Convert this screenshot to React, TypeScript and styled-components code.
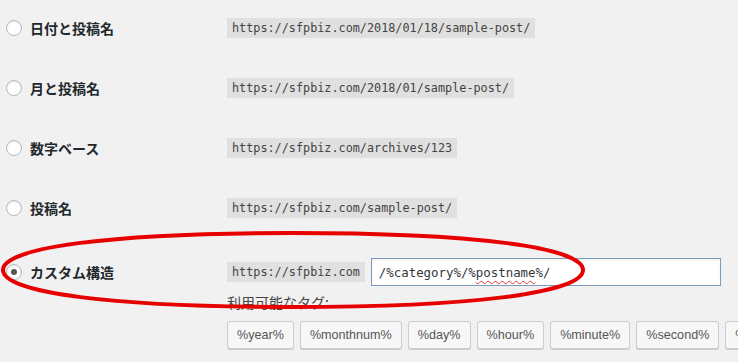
import styled, { createGlobalStyle } from 'styled-components';

const GlobalStyle = createGlobalStyle`
  html, body {
    margin: 0;
    padding: 0;
    background: #f1f1f1;
    overflow: hidden;
  }
  body {
    font-family: "Noto Sans CJK JP", "Noto Sans", sans-serif;
    color: #23282d;
  }
`;

const Page = styled.div`
  position: relative;
  width: 738px;
  height: 362px;
  padding: 18px 0 0 6px;
  box-sizing: border-box;
  overflow: hidden;
`;

const Option = styled.div<{ $custom?: boolean }>`
  display: grid;
  grid-template-columns: 221px 1fr;
  align-items: ${p => (p.$custom ? 'start' : 'center')};
  height: 20px;
  margin-bottom: 40px;
`;

const LabelCell = styled.label<{ $custom?: boolean }>`
  display: flex;
  align-items: center;
  gap: 8px;
  height: 20px;
  margin-top: ${p => (p.$custom ? '4px' : '0')};
  font-size: 14px;
  font-weight: 700;
  color: #23282d;
`;

const Radio = styled.span<{ $checked?: boolean }>`
  position: relative;
  width: 16px;
  height: 16px;
  box-sizing: border-box;
  border-radius: 50%;
  border: 1px solid #b4b9be;
  background: #fff;
  box-shadow: inset 0 1px 2px rgba(0, 0, 0, 0.1);
  flex-shrink: 0;

  &::after {
    content: '';
    display: ${p => (p.$checked ? 'block' : 'none')};
    position: absolute;
    left: 4px;
    top: 4px;
    width: 6px;
    height: 6px;
    border-radius: 50%;
    background: #555;
  }
`;

const Code = styled.code`
  display: inline-block;
  justify-self: start;
  height: 20px;
  line-height: 20px;
  padding: 0 5px;
  background: rgba(0, 0, 0, 0.065);
  font-family: "DejaVu Sans Mono", monospace;
  font-size: 11.8px;
  color: #444;
`;

const CustomColumn = styled.div`
  display: flex;
  flex-direction: column;
`;

const StructureRow = styled.div`
  display: flex;
  align-items: center;
  gap: 6px;
`;

const Field = styled.div`
  width: 350px;
  height: 28px;
  box-sizing: border-box;
  border: 1px solid #7a9cbb;
  background: #fff;
  box-shadow: inset 0 1px 2px rgba(0, 0, 0, 0.07);
  padding: 0 7px;
  display: flex;
  align-items: center;
  font-family: "DejaVu Sans Mono", monospace;
  font-size: 12.4px;
  color: #32373c;
  white-space: pre;
`;

const Misspelled = styled.span`
  text-decoration: underline wavy #d33;
  text-decoration-thickness: 1px;
  text-underline-offset: 3px;
`;

const TagsCaption = styled.div`
  margin-top: 6px;
  height: 20px;
  line-height: 20px;
  font-size: 14px;
  font-weight: 400;
  color: #444;
`;

const TagList = styled.div`
  display: flex;
  gap: 6px;
  margin-top: 9px;
  white-space: nowrap;
`;

const TagButton = styled.button`
  flex-shrink: 0;
  height: 28px;
  padding: 0 9px;
  border: 1px solid #ccc;
  border-radius: 3px;
  background: #f7f7f7;
  box-shadow: 0 1px 0 #ccc;
  font-family: "Liberation Sans", Arial, sans-serif;
  font-size: 12.6px;
  color: #555;
  cursor: pointer;
`;

const Annotation = styled.svg`
  position: absolute;
  left: 0;
  top: 0;
  pointer-events: none;
`;

const options = [
  { label: '日付と投稿名', sample: 'https://sfpbiz.com/2018/01/18/sample-post/' },
  { label: '月と投稿名', sample: 'https://sfpbiz.com/2018/01/sample-post/' },
  { label: '数字ベース', sample: 'https://sfpbiz.com/archives/123' },
  { label: '投稿名', sample: 'https://sfpbiz.com/sample-post/' },
];

const tags = ['%year%', '%monthnum%', '%day%', '%hour%', '%minute%', '%second%', '%post_id%', '%postname%'];

export default function App() {
  return (
    <>
      <GlobalStyle />
      <Page>
        {options.map(o => (
          <Option key={o.label}>
            <LabelCell>
              <Radio />
              {o.label}
            </LabelCell>
            <Code>{o.sample}</Code>
          </Option>
        ))}
        <Option $custom>
          <LabelCell $custom>
            <Radio $checked />
            カスタム構造
          </LabelCell>
          <CustomColumn>
            <StructureRow>
              <Code>https://sfpbiz.com</Code>
              <Field>
                /%category%/%<Misspelled>postname</Misspelled>%/
              </Field>
            </StructureRow>
            <TagsCaption>利用可能なタグ:</TagsCaption>
            <TagList>
              {tags.map(t => (
                <TagButton key={t}>{t}</TagButton>
              ))}
            </TagList>
          </CustomColumn>
        </Option>
        <Annotation width="738" height="362" viewBox="0 0 738 362">
          <path
            d="M 3 270 C 3 247 113 233 292 233 C 471 233 583 247 583 270 C 583 293 471 307 292 307 C 113 307 3 293 3 270 Z"
            fill="none"
            stroke="#e60000"
            strokeWidth="4"
          />
        </Annotation>
      </Page>
    </>
  );
}
